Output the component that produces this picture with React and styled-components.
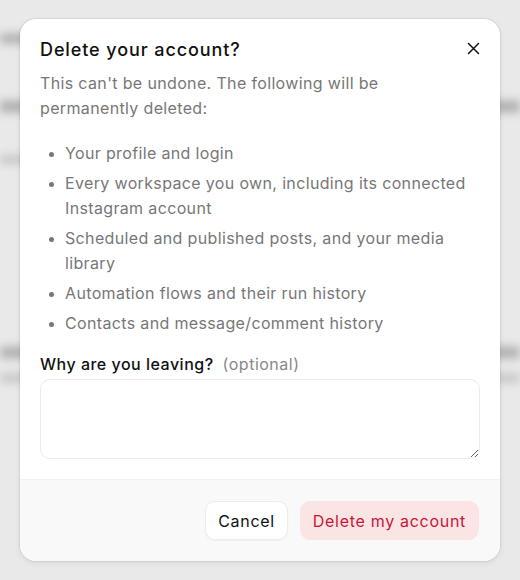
import styled, { createGlobalStyle } from "styled-components";

const Global = createGlobalStyle`
  html, body { margin: 0; padding: 0; }
  body {
    font-family: Inter, "Noto Sans", sans-serif;
    background: #e9e9e9;
  }
`;

const Page = styled.div`
  position: relative;
  width: 520px;
  height: 580px;
  overflow: hidden;
  background: #e9e9e9;
`;

const Backdrop = styled.div`
  display: flex;
  flex-direction: column;
  padding-top: 34px;
  filter: blur(5px);
`;

const Ghost = styled.div`
  height: ${(p) => p.h || 8}px;
  margin-top: ${(p) => p.gap || 0}px;
  width: ${(p) => p.w || "100%"};
  background: ${(p) => p.tone || "#b0b0b0"};
`;

const Overlay = styled.div`
  position: absolute;
  inset: 0;
  display: flex;
  justify-content: center;
  padding-top: 19px;
`;

const Modal = styled.div`
  width: 480px;
  height: 542px;
  background: #fff;
  border-radius: 16px;
  box-shadow: 0 0 0 1px rgba(0, 0, 0, 0.06), 0 2px 6px rgba(0, 0, 0, 0.08);
  display: flex;
  flex-direction: column;
  overflow: hidden;
`;

const Body = styled.div`
  flex: 1;
  padding: 18px 20px 20px;
`;

const Header = styled.div`
  display: flex;
  justify-content: space-between;
  align-items: flex-start;
`;

const Title = styled.h2`
  margin: 0;
  font-size: 18px;
  line-height: 26px;
  font-weight: 500;
  letter-spacing: 0.9px;
  color: #111;
`;

const Close = styled.button`
  border: none;
  background: none;
  padding: 0;
  margin: 4px 0 0;
  width: 14px;
  height: 14px;
  display: flex;
  align-items: center;
  justify-content: center;
  color: #111;
  cursor: pointer;
`;

const Lead = styled.p`
  margin: 8px 0 0;
  max-width: 420px;
  font-size: 16px;
  line-height: 25px;
  letter-spacing: 0.35px;
  color: #777;
`;

const List = styled.ul`
  margin: 20px 0 0;
  padding: 0 0 0 25px;
  display: flex;
  flex-direction: column;
  gap: 5px;
  font-size: 16px;
  line-height: 25px;
  letter-spacing: 0.35px;
  color: #777;

  li::marker {
    color: #777;
    font-size: 14px;
  }
`;

const Label = styled.div`
  margin-top: 16px;
  font-size: 16px;
  line-height: 24px;
  font-weight: 500;
  letter-spacing: 0.5px;
  color: #111;
`;

const Optional = styled.span`
  margin-left: 9px;
  font-weight: 400;
  color: #888;
`;

const Reason = styled.textarea`
  display: block;
  box-sizing: border-box;
  margin-top: 3px;
  width: 440px;
  height: 80px;
  border: 1px solid #ececec;
  border-radius: 10px;
  padding: 10px 12px;
  font: inherit;
  font-size: 15px;
  outline: none;
  resize: vertical;
`;

const Footer = styled.div`
  background: #f9f9f9;
  border-top: 1px solid #f1f1f1;
  padding: 21px 21px 21px;
  display: flex;
  justify-content: flex-end;
  gap: 12px;
`;

const Button = styled.button`
  height: 39px;
  padding: 0 12px;
  border-radius: 10px;
  font-family: inherit;
  font-size: 16px;
  letter-spacing: 0.7px;
  cursor: pointer;
  border: 1px solid ${(p) => (p.danger ? "#fbe4e4" : "#ececec")};
  background: ${(p) => (p.danger ? "#fbe4e4" : "#fff")};
  color: ${(p) => (p.danger ? "#c8163a" : "#111")};
  box-shadow: ${(p) => (p.danger ? "none" : "0 1px 2px rgba(0,0,0,0.04)")};
`;

const items = [
  "Your profile and login",
  "Every workspace you own, including its connected Instagram account",
  "Scheduled and published posts, and your media library",
  "Automation flows and their run history",
  "Contacts and message/comment history",
];

export default function App() {
  return (
    <Page>
      <Global />
      <Backdrop>
        <Ghost h={9} w="60%" tone="#a9a9a9" />
        <Ghost h={11} gap={58} tone="#aaaaaa" />
        <Ghost h={7} gap={44} w="50%" tone="#bdbdbd" />
        <Ghost h={11} gap={184} tone="#acacac" />
        <Ghost h={8} gap={16} tone="#c2c2c2" />
      </Backdrop>
      <Overlay>
        <Modal>
          <Body>
            <Header>
              <Title>Delete your account?</Title>
              <Close aria-label="Close">
                <svg width="13" height="13" viewBox="0 0 13 13" fill="none">
                  <path d="M1.5 1.5L11.5 11.5M11.5 1.5L1.5 11.5" stroke="currentColor" strokeWidth="1.5" strokeLinecap="round" />
                </svg>
              </Close>
            </Header>
            <Lead>This can't be undone. The following will be permanently deleted:</Lead>
            <List>
              {items.map((t) => (
                <li key={t}>{t}</li>
              ))}
            </List>
            <Label>
              Why are you leaving?<Optional>(optional)</Optional>
            </Label>
            <Reason />
          </Body>
          <Footer>
            <Button>Cancel</Button>
            <Button danger>Delete my account</Button>
          </Footer>
        </Modal>
      </Overlay>
    </Page>
  );
}
